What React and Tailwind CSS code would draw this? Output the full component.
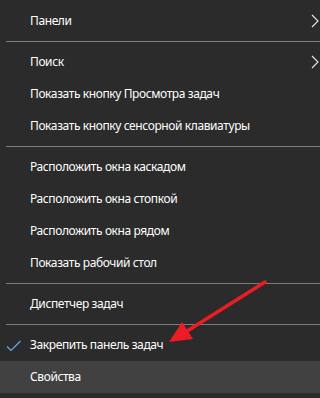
import React from "react";

const Chevron = () => (
  <svg width="8" height="14" viewBox="0 0 8 14" className="absolute right-[1px] top-1/2 -translate-y-1/2">
    <path d="M1 1 L7 7 L1 13" fill="none" stroke="#e8e8e8" strokeWidth="1.1" />
  </svg>
);

const Item = ({ children, sub, checked, active }) => (
  <div
    className={`relative h-[32px] flex items-center pl-[30px] text-[12px] tracking-[-0.4px] text-white ${active ? "bg-[#414141]" : ""}`}
  >
    {checked && (
      <svg width="16" height="14" viewBox="0 0 16 14" className="absolute left-[6px] top-[10px]">
        <path d="M1 7.5 L5 11.5 L14.5 2" fill="none" stroke="#6aa6e8" strokeWidth="1.2" />
      </svg>
    )}
    <span>{children}</span>
    {sub && <Chevron />}
  </div>
);

const Sep = () => (
  <div className="h-[9px] pt-[4px] pl-[6px]">
    <div className="h-px bg-[#7d7d7d]" />
  </div>
);

export default function App() {
  return (
    <div
      className="relative w-[320px] h-[398px] bg-[#2b2b2b] pt-[5px] overflow-hidden"
      style={{ fontFamily: '"Noto Sans", "Open Sans", sans-serif' }}
    >
      <Item sub>Панели</Item>
      <Sep />
      <Item sub>Поиск</Item>
      <Item>Показать кнопку Просмотра задач</Item>
      <Item>Показать кнопку сенсорной клавиатуры</Item>
      <Sep />
      <Item>Расположить окна каскадом</Item>
      <Item>Расположить окна стопкой</Item>
      <Item>Расположить окна рядом</Item>
      <Item>Показать рабочий стол</Item>
      <Sep />
      <Item>Диспетчер задач</Item>
      <Sep />
      <Item checked>Закрепить панель задач</Item>
      <Item active>Свойства</Item>
      <svg
        width="320"
        height="398"
        viewBox="0 0 320 398"
        className="absolute left-0 top-0 pointer-events-none"
      >
        <line x1="265" y1="282" x2="184" y2="333" stroke="#ed1c24" strokeWidth="3.5" strokeLinecap="round" />
        <polygon points="169,342 182,322 193,339" fill="#ed1c24" />
      </svg>
    </div>
  );
}
